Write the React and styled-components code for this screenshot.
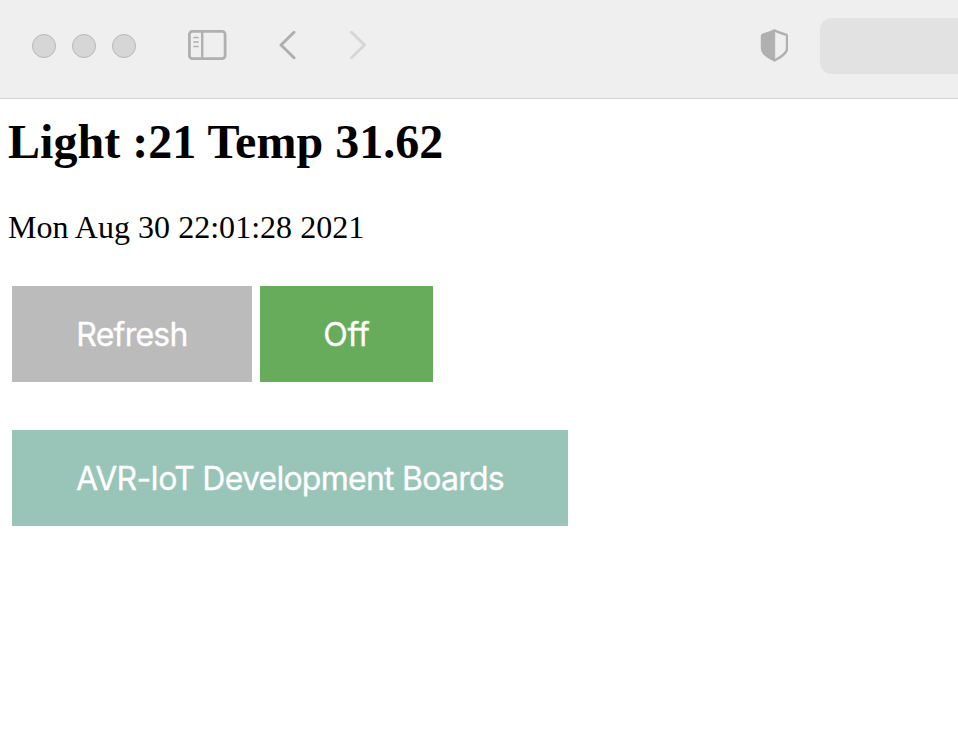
import React from "react";
import styled, { createGlobalStyle } from "styled-components";

const Global = createGlobalStyle`
  *{box-sizing:border-box}
  body{margin:0;background:#fff;overflow:hidden}
`;
const Toolbar = styled.header`
  display:flex;align-items:center;height:99px;padding:0 0 6px 32px;
  background:#efefef;border-bottom:1px solid #d4d4d4;
`;
const Lights = styled.div`
  display:flex;gap:16px;margin-right:52px;
`;
const Light = styled.span`
  width:24px;height:24px;border-radius:50%;background:#d6d6d6;border:1px solid #b8b8b8;
`;
const Icon = styled.svg`
  flex:none;display:block;width:${p => p.$w}px;height:${p => p.$h}px;
  margin:0 ${p => p.$gap}px ${p => p.$lift || 0}px 0;
  fill:none;stroke:${p => p.$color};stroke-width:3;stroke-linecap:round;stroke-linejoin:round;
`;
const Address = styled.div`
  flex:1;height:56px;border-radius:12px 0 0 12px;background:#e2e2e2;
`;
const Content = styled.main`
  padding:15px 8px;font-family:"Liberation Serif",serif;color:#000;
`;
const Title = styled.h1`
  margin:0;font-size:48px;line-height:56px;letter-spacing:0.03px;white-space:nowrap;
`;
const Stamp = styled.p`
  margin:39px 0 0;font-size:32px;line-height:36px;letter-spacing:0.03px;white-space:nowrap;
`;
const Row = styled.div`
  display:flex;gap:8px;padding-left:4px;margin-top:${p => p.$top}px;
`;
const Button = styled.button`
  width:${p => p.$w}px;height:96px;border:0;padding:0;background:${p => p.$bg};color:#fff;
  font:400 32px Inter,sans-serif;letter-spacing:${p => p.$track}px;white-space:nowrap;
  -webkit-text-stroke:0.3px #fff;
`;

export default function App() {
  return (
    <>
      <Global />
      <Toolbar>
        <Lights><Light /><Light /><Light /></Lights>
        <Icon $w={39} $h={30} $gap={52} $lift={2} $color="#b0b0b0" viewBox="0 0 39 30">
          <rect x="1.4" y="1.4" width="35.700" height="27.200" rx="3" strokeWidth="2.800" />
          <path d="M14.200 2v26" strokeWidth="2.400" />
          <path d="M6 7.500h4M6 12h4M6 16.500h4" strokeWidth="1.700" />
        </Icon>
        <Icon $w={18} $h={30} $gap={52} $lift={2} $color="#afafaf" viewBox="0 0 18 30"><path d="M15 2.300 2 15l13 12.700" /></Icon>
        <Icon $w={18} $h={30} $gap={393} $lift={2} $color="#d6d6d6" viewBox="0 0 18 30"><path d="M2.500 2.300 15.500 15l-13 12.700" /></Icon>
        <Icon $w={28} $h={34} $gap={32} $lift={2} $color="#b0b0b0" viewBox="0 0 28 34">
          <path d="M14.500 2.400Q18 4.200 26 6.700Q27 7 27 8v12.500c0 5.500-7 9-12.500 12C9 29.500 2 26 2 20.500V8Q2 7 3 6.700Q11 4.200 14.500 2.400Z" strokeWidth="2.400" />
          <path d="M14.700 2.400V32.500C9 29.500 2 26 2 20.500V8Q2 7 3 6.700Q11 4.200 14.700 2.400Z" fill="#b0b0b0" strokeWidth="1" />
        </Icon>
        <Address />
      </Toolbar>
      <Content>
        <Title>Light :21 Temp 31.62</Title>
        <Stamp>Mon Aug 30 22:01:28 2021</Stamp>
        <Row $top={41}>
          <Button $w={240} $bg="#bbbbbb" $track={-0.75}>Refresh</Button>
          <Button $w={173} $bg="#67ac5b" $track={-0.2}>Off</Button>
        </Row>
        <Row $top={48}><Button $w={556} $bg="#98c5b8" $track={-0.75}>AVR-IoT Development Boards</Button></Row>
      </Content>
    </>
  );
}
